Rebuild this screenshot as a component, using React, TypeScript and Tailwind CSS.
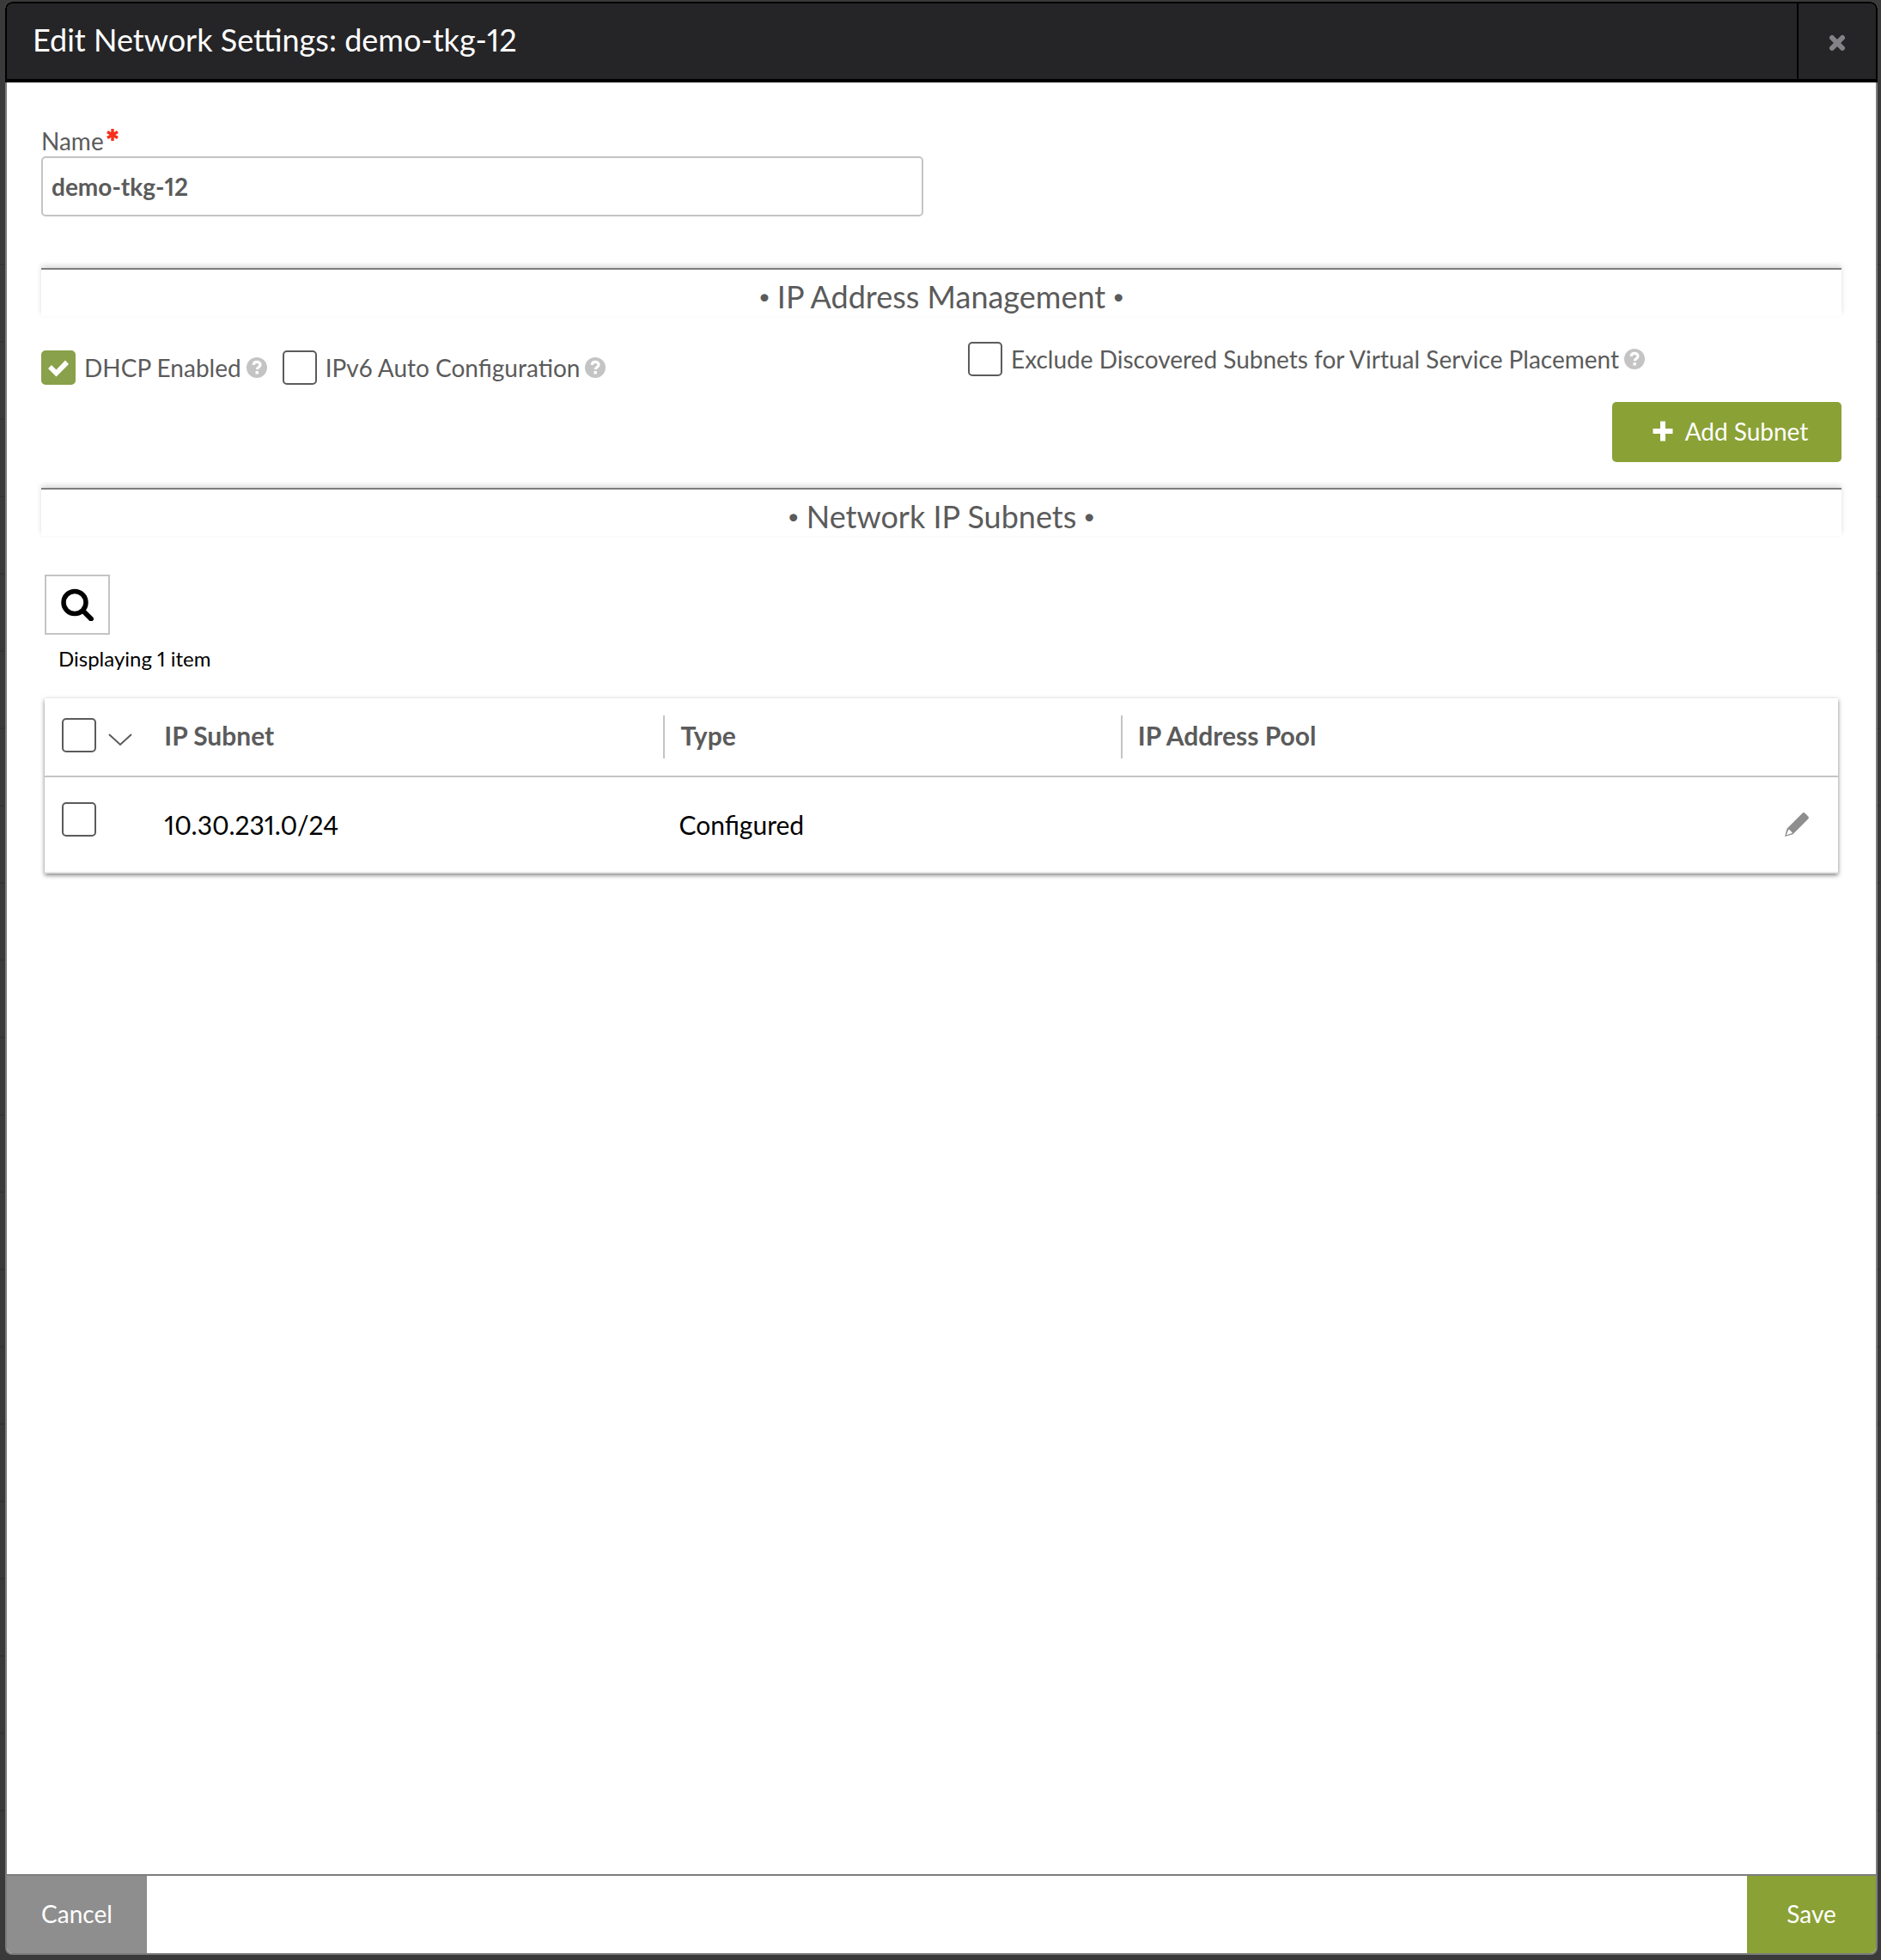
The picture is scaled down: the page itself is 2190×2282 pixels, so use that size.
import { useState } from "react";
import type { ReactNode } from "react";

// Row rules of the page that lies dimmed behind the dialog.
const PAGE_ROWS = 21;

function DimmedPage() {
  return (
    <div aria-hidden="true" className="absolute inset-0 overflow-hidden pt-[307px]">
      {Array.from({ length: PAGE_ROWS }, (_, i) => (
        <div key={i} className="h-[90px] border-t-2 border-[#343434]" />
      ))}
    </div>
  );
}

function HelpIcon({ label }: { label: string }) {
  return (
    <button type="button" aria-label={label} className="size-6 shrink-0">
      <svg viewBox="0 0 24 24" className="size-6" aria-hidden="true">
        <circle cx="12" cy="12" r="12" fill="#c4c4c4" />
        <path
          d="M8.2 8.9C8.3 6.600 9.900 5.400 12.100 5.400c2.200 0 3.900 1.300 3.900 3.300 0 2.700-3.500 2.800-3.700 5.400"
          fill="none"
          stroke="#fff"
          strokeWidth="3.200"
        />
        <rect x="10.500" y="16" width="3.400" height="3.400" rx="0.500" fill="#fff" />
      </svg>
    </button>
  );
}

type CheckboxProps = {
  id: string;
  checked: boolean;
  onChange: (value: boolean) => void;
  label?: string;
};

function Checkbox({ id, checked, onChange, label }: CheckboxProps) {
  return (
    <span className="relative grid size-10 shrink-0">
      <input
        id={id}
        type="checkbox"
        aria-label={label}
        checked={checked}
        onChange={(e) => onChange(e.target.checked)}
        className="size-10 appearance-none rounded-[5px] border-2 border-[#5b5b5b] bg-white checked:border-[#89a14a] checked:bg-[#89a14a]"
      />
      {checked && (
        <svg viewBox="0 0 40 40" className="pointer-events-none absolute inset-0 size-10" aria-hidden="true">
          <path d="M8 21l4-4 5.500 5.500L28 11.500l4 4.500-14.500 14.500z" fill="#fff" />
        </svg>
      )}
    </span>
  );
}

function SectionTitle({ children }: { children: ReactNode }) {
  return (
    <h2 className="flex h-14 items-center justify-center gap-2 border-t-2 border-[#7d7d7d] pt-2 text-4xl shadow-[0_-3px_6px_rgba(0,0,0,0.14)]">
      <span className="text-2xl">•</span>
      {children}
      <span className="text-2xl">•</span>
    </h2>
  );
}

function HeaderCell({ children }: { children: ReactNode }) {
  return (
    <th scope="col" className="p-0 text-left font-bold">
      <div className="h-[50px] border-l-2 border-[#c4c4c4] pl-[18px] leading-[46px]">{children}</div>
    </th>
  );
}

export default function App() {
  const [name, setName] = useState("demo-tkg-12");
  const [dhcp, setDhcp] = useState(true);
  const [ipv6, setIpv6] = useState(false);
  const [exclude, setExclude] = useState(false);
  const [all, setAll] = useState(false);
  const [row, setRow] = useState(false);

  return (
    <div className="relative flex min-h-screen bg-[#3a3a3a] pt-0.5 pr-1 pb-1.5 pl-1.5 font-[Lato,sans-serif] text-[28px] text-[#5b5b5b] proportional-nums">
      <DimmedPage />
      <div
        role="dialog"
        aria-labelledby="dialog-title"
        className="relative flex flex-1 flex-col overflow-hidden rounded-lg bg-[#7d7d7d]"
      >
        <header className="flex h-[94px] rounded-t-lg border-2 border-b-4 border-black bg-[#252527]">
          <h1 id="dialog-title" className="flex-1 pl-[30px] text-4xl leading-[84px] text-white">
            Edit Network Settings: {name}
          </h1>
          <button
            type="button"
            aria-label="Close"
            className="flex w-[92px] items-center justify-center border-l-2 border-black pt-1"
          >
            <svg viewBox="0 0 20 20" className="size-5" aria-hidden="true">
              <path d="M4 4l12 12M16 4L4 16" stroke="#838387" strokeWidth="6" strokeLinecap="round" />
            </svg>
          </button>
        </header>

        <main className="mx-0.5 flex-1 bg-white px-10 pt-[52px]">
          <div className="w-[49%]">
            <label htmlFor="net-name" className="mb-0.5 flex h-8 items-center gap-0.5">
              Name
              <svg viewBox="0 0 16 16" className="mb-3.5 size-4" aria-hidden="true">
                <path d="M8 1v14M2 4.500l12 7M14 4.500l-12 7" stroke="#f5301c" strokeWidth="3.400" />
              </svg>
            </label>
            <input
              id="net-name"
              value={name}
              onChange={(e) => setName(e.target.value)}
              className="h-[70px] w-full rounded-[5px] border-2 border-[#c4c4c4] px-2.5 font-bold"
            />
          </div>

          <div className="mt-[60px]">
            <SectionTitle>IP Address Management</SectionTitle>
          </div>

          <div className="mt-[30px] grid grid-cols-[1079fr_1017fr]">
            <div className="flex h-[50px] items-end gap-[18px] leading-10">
              <div className="flex items-center gap-1.5">
                <Checkbox id="dhcp" checked={dhcp} onChange={setDhcp} />
                <label htmlFor="dhcp" className="pl-1">DHCP Enabled</label>
                <HelpIcon label="About DHCP" />
              </div>
              <div className="flex items-center gap-1.5">
                <Checkbox id="ipv6" checked={ipv6} onChange={setIpv6} />
                <label htmlFor="ipv6" className="pl-1">IPv6 Auto Configuration</label>
                <HelpIcon label="About IPv6 auto configuration" />
              </div>
            </div>
            <div className="flex h-10 items-center gap-1.5">
              <Checkbox id="exclude" checked={exclude} onChange={setExclude} />
              <label htmlFor="exclude" className="pl-1">
                Exclude Discovered Subnets for Virtual Service Placement
              </label>
              <HelpIcon label="About excluding discovered subnets" />
            </div>
          </div>

          <div className="mt-5 flex justify-end">
            <button
              type="button"
              className="flex h-[70px] w-[267px] items-center justify-center gap-3.5 rounded-[5px] bg-[#8aa135] pb-0.5 pl-2 text-white"
            >
              <svg viewBox="0 0 24 24" className="size-6" aria-hidden="true">
                <path
                  d="M12 3.500v17M3.500 12h17"
                  stroke="#fff"
                  strokeWidth="6"
                  strokeLinejoin="round"
                  strokeLinecap="square"
                />
              </svg>
              Add Subnet
            </button>
          </div>

          <div className="mt-[30px]">
            <SectionTitle>Network IP Subnets</SectionTitle>
          </div>

          <div className="mx-1 mt-[45px] text-black">
            <button
              type="button"
              aria-label="Search"
              className="flex h-[70px] w-[76px] items-center justify-center border-2 border-[#c4c4c4]"
            >
              <svg viewBox="0 0 38 38" className="size-[38px]" aria-hidden="true">
                <circle cx="16" cy="16.500" r="13" fill="none" stroke="#000" strokeWidth="5.500" />
                <path d="M26 26.500l9 9" stroke="#000" strokeWidth="6" strokeLinecap="round" />
              </svg>
            </button>
            <p className="mt-3 pl-4 text-2xl leading-8">Displaying 1 item</p>

            <table className="mt-[30px] w-full table-fixed border-b-2 border-[#e4e4e4] text-[30px] shadow-[0_2px_5px_rgba(0,0,0,0.5)]">
              <colgroup>
                <col className="w-[6%]" />
                <col />
                <col className="w-[25.5%]" />
                <col className="w-[34%]" />
                <col className="w-[6%]" />
              </colgroup>
              <thead>
                <tr className="h-[91px] border-b-2 border-[#c4c4c4] text-[#5b5b5b]">
                  <th className="p-0 pb-1 pl-5">
                    <div className="flex items-center gap-3.5">
                      <Checkbox id="all" label="Select all" checked={all} onChange={setAll} />
                      <button type="button" aria-label="Selection options" className="pt-2.5">
                        <svg viewBox="0 0 28 16" className="h-4 w-7" aria-hidden="true">
                          <path d="M1 2l13 12L27 2" fill="none" stroke="#5b5b5b" strokeWidth="2" />
                        </svg>
                      </button>
                    </div>
                  </th>
                  <th scope="col" className="p-0 pb-1 pl-3.5 text-left font-bold">IP Subnet</th>
                  <HeaderCell>Type</HeaderCell>
                  <HeaderCell>IP Address Pool</HeaderCell>
                  <td />
                </tr>
              </thead>
              <tbody>
                <tr className="h-[112px]">
                  <td className="p-0 pb-3 pl-5">
                    <Checkbox id="row" label="Select 10.30.231.0/24" checked={row} onChange={setRow} />
                  </td>
                  <td className="p-0 pl-3.5">10.30.231.0/24</td>
                  <td className="p-0 pl-[18px]">Configured</td>
                  <td />
                  <td className="p-0 pr-[34px]">
                    <button type="button" aria-label="Edit subnet" className="ml-auto block">
                      <svg viewBox="0 0 28 28" className="size-7" aria-hidden="true">
                        <path
                          fillRule="evenodd"
                          fill="#8e8e8e"
                          d="M20.500.800q1.500-1.400 3 0l3.700 3.700q1.400 1.500 0 3L9.500 25.200 0 28l2.500-9.200zM4 20.500L1.800 26.200 8 24.300l.800-.900-4-3.800z"
                        />
                      </svg>
                    </button>
                  </td>
                </tr>
              </tbody>
            </table>
          </div>
        </main>

        <footer className="m-0.5 flex h-[90px] overflow-hidden rounded-b-md bg-white text-white">
          <button type="button" className="w-[163px] bg-[#8e8e8e] pb-0.5">Cancel</button>
          <div className="flex-1" />
          <button type="button" className="w-[150px] bg-[#8aa135] pb-0.5">Save</button>
        </footer>
      </div>
    </div>
  );
}
